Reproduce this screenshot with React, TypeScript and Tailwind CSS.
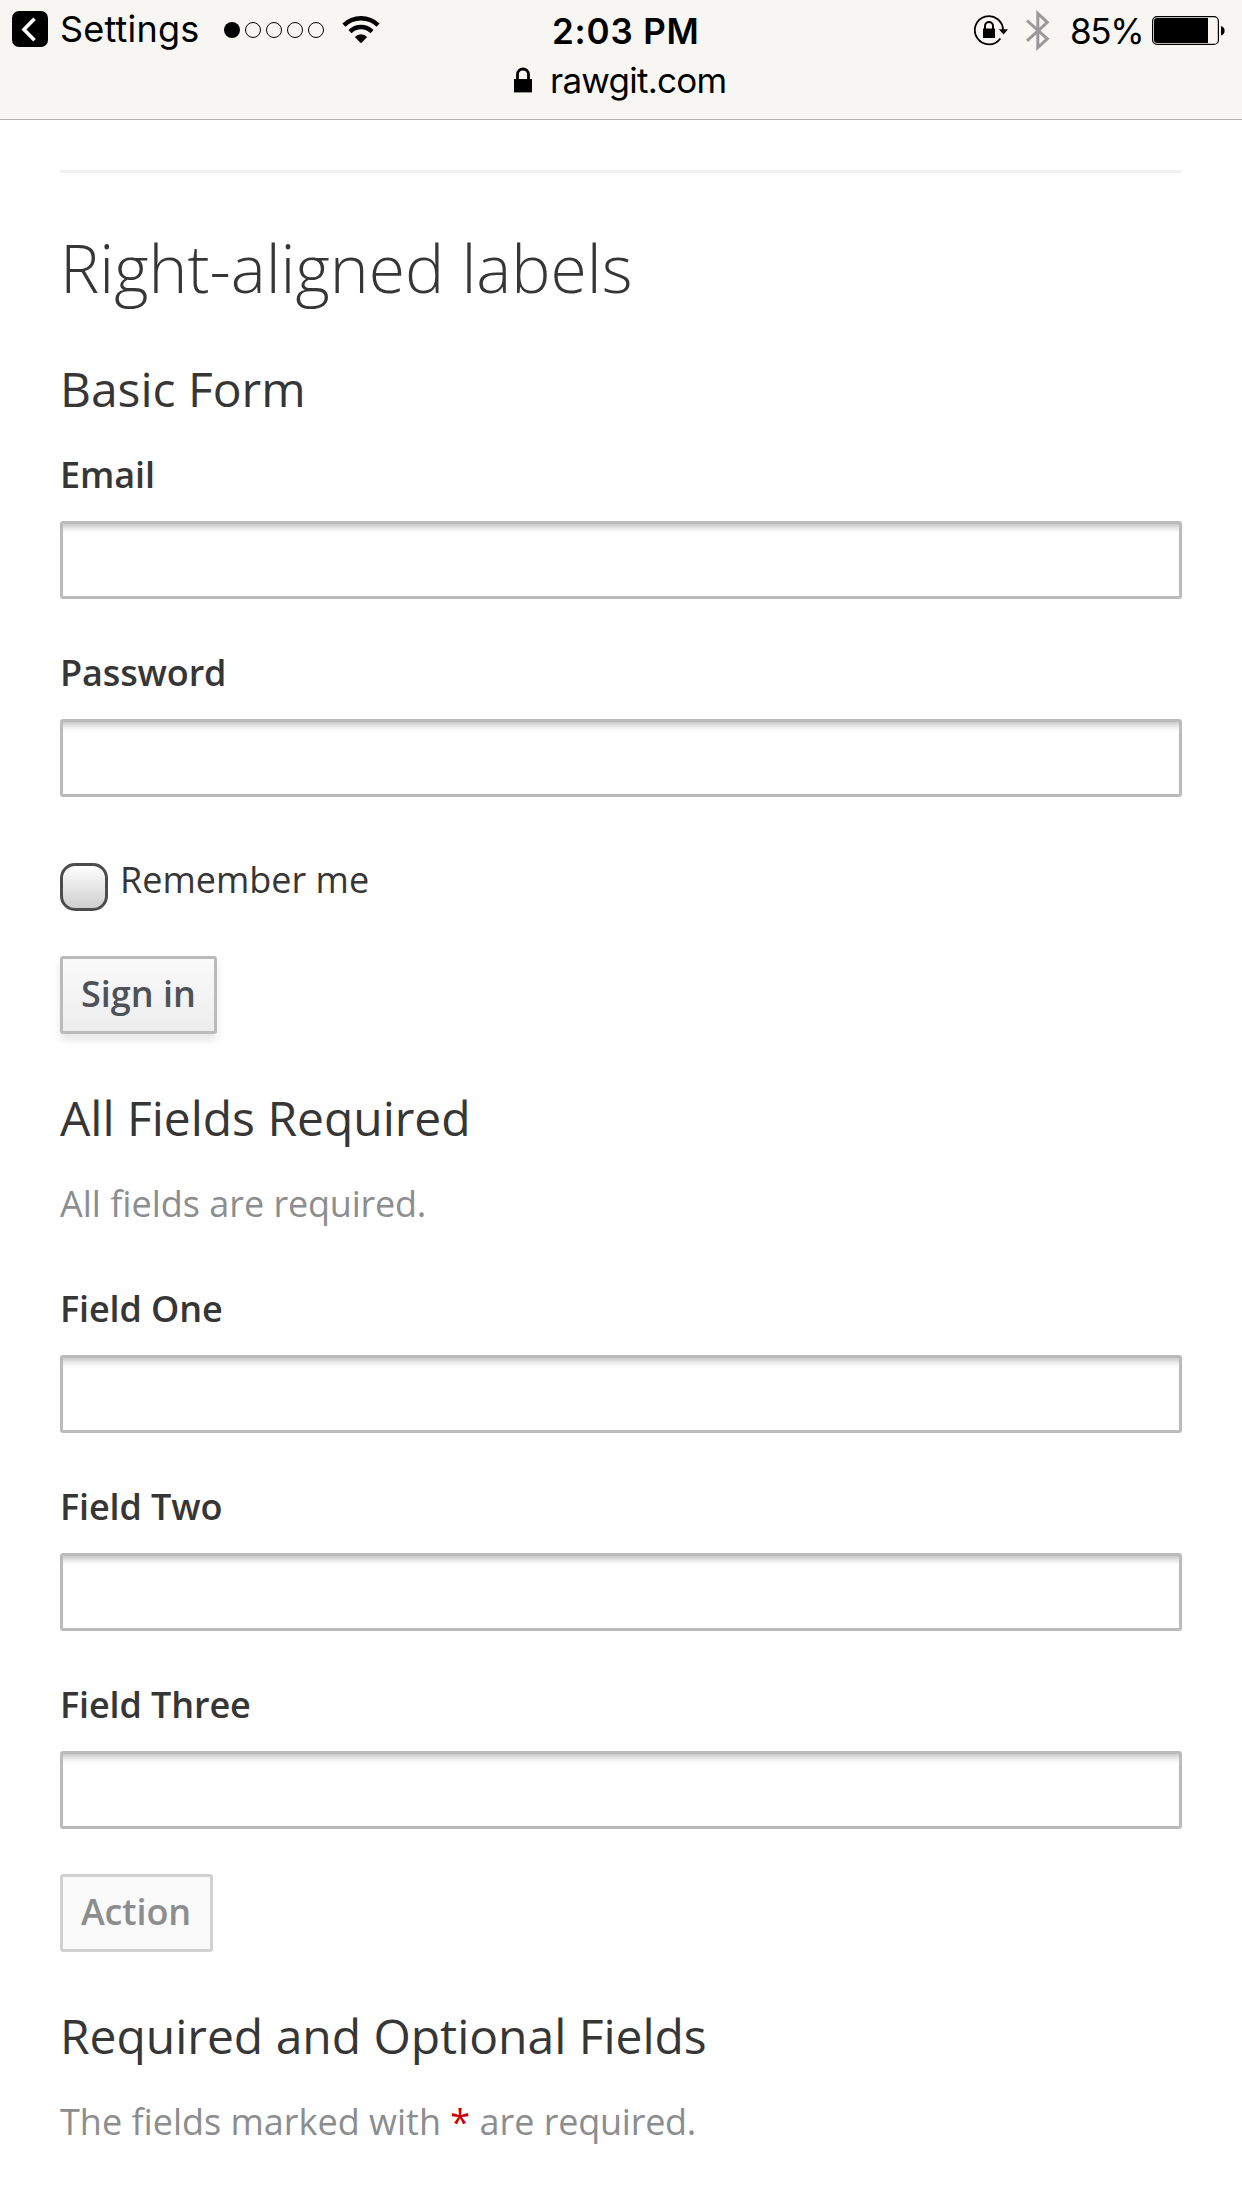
import type { ReactNode } from "react";

function SignalDots() {
  return (
    <div className="ml-[26px] mt-[22px] flex gap-[5px]">
      <span className="size-4 rounded-full bg-black" />
      {[1, 2, 3, 4].map((n) => (
        <span key={n} className="size-4 rounded-full border border-black" />
      ))}
    </div>
  );
}

function WifiIcon() {
  return (
    <svg className="ml-[18px] mt-[15px]" width="38" height="29" viewBox="0 0 38 29">
      <g fill="none" stroke="#000" strokeWidth="4.4">
        <path d="M1.9 10.2 A24.5 24.5 0 0 1 36.1 10.2" />
        <path d="M8 16.6 A15.5 15.5 0 0 1 30 16.6" />
      </g>
      <path d="M12.8 22 A8.6 8.6 0 0 1 25.2 22 L19 28.2 Z" />
    </svg>
  );
}

function BackIcon() {
  return (
    <svg className="mt-[11px]" width="36" height="36" viewBox="0 0 36 36">
      <rect width="36" height="36" rx="7" />
      <path d="M22.5 7.8 L12 18.5 L22.5 29.2" fill="none" stroke="#fff" strokeWidth="3.6" />
    </svg>
  );
}

function RotationLockIcon() {
  return (
    <svg className="mt-[14px]" width="35" height="32" viewBox="0 0 35 32">
      <path d="M26.4 24.4 A14.1 14.1 0 1 1 29 17" fill="none" stroke="#000" strokeWidth="1.8" />
      <path d="M24.8 15.3 H34 L29.6 20.6 Z" />
      <rect x="9" y="14.5" width="12" height="9.5" />
      <path d="M11 15 V12 a4 4 0 0 1 8 0 V15" fill="none" stroke="#000" strokeWidth="2" />
    </svg>
  );
}

function BluetoothIcon() {
  return (
    <svg className="ml-[17px] mt-[10px]" width="24" height="42" viewBox="0 0 24 42">
      <path
        d="M1 10.5 L21.3 28.8 L11.8 37.6 V3.5 L21.3 12.3 L1 30.8"
        fill="none"
        stroke="#999"
        strokeWidth="3"
      />
    </svg>
  );
}

function BatteryIcon() {
  return (
    <svg className="mt-[16px]" width="74" height="29" viewBox="0 0 74 29">
      <rect x="0.6" y="0.6" width="65.8" height="27.8" rx="4.5" fill="none" stroke="#000" strokeWidth="1.2" />
      <path d="M5 2 H56 V27 H5 a3 3 0 0 1 -3 -3 V5 a3 3 0 0 1 3 -3 Z" />
      <path d="M69 10 a5 5 0 0 1 0 9.6 Z" />
    </svg>
  );
}

function LockIcon() {
  return (
    <svg width="18" height="26" viewBox="0 0 18 26">
      <rect y="12" width="18" height="13.4" />
      <path d="M3.5 13 V7.5 a5.5 5.5 0 0 1 11 0 V13" fill="none" stroke="#000" strokeWidth="2.8" />
    </svg>
  );
}

function BrowserBar() {
  return (
    <header className="h-[120px] border-b border-[#b0b0b0] bg-[#f7f6f3] font-['Inter',sans-serif] text-[36px] leading-[44px] text-black">
      <div className="grid h-[58px] grid-cols-[552px_422px_1fr] whitespace-nowrap">
        <div className="flex items-start pl-3">
          <BackIcon />
          <span className="ml-[12px] mt-[7px] w-[138px] tracking-[0.2px]">Settings</span>
          <SignalDots />
          <WifiIcon />
        </div>
        <span className="mt-[9px] text-[35px] font-semibold tracking-[0.8px]">2:03 PM</span>
        <div className="flex items-start">
          <RotationLockIcon />
          <BluetoothIcon />
          <span className="ml-[20px] mt-[9px] w-[82px] text-[35px] tracking-[-1.3px]">85%</span>
          <BatteryIcon />
        </div>
      </div>
      <div className="flex items-start pl-[514px]">
        <div className="pt-[9px]">
          <LockIcon />
        </div>
        <span className="ml-[18px] whitespace-nowrap text-[35px] tracking-[-0.75px]">rawgit.com</span>
      </div>
    </header>
  );
}

function Field({ label }: { label: string }) {
  return (
    <div className="mb-[44px]">
      <label className="block">
        <span className="block h-[76px] font-semibold leading-[60px] tracking-[-0.12px]">{label}</span>
        <input className="block h-[78px] w-full rounded-[3px] border-[3px] border-[#bbb] bg-white px-[18px] shadow-[inset_0_9px_7px_-6px_rgba(3,3,3,0.26)] outline-none" />
      </label>
    </div>
  );
}

function SubHeading({ children }: { children: ReactNode }) {
  return <h3 className="text-[48px] leading-[54px] tracking-[-0.03px]">{children}</h3>;
}

function Note({ children }: { children: ReactNode }) {
  return <p className="mt-[29px] leading-[60px] text-[#8b8d8f]">{children}</p>;
}

export default function App() {
  return (
    <div className="h-[2208px] overflow-hidden bg-white font-['Open_Sans',sans-serif] text-[36px] text-[#363636]">
      <BrowserBar />
      <main className="px-[60px] pt-[50px]">
        <hr className="border-t-[3px] border-[#f1f1f1]" />
        <h1 className="mt-[58px] text-[66px] font-light leading-[72px]">Right-aligned labels</h1>

        <form>
          <div className="pb-[29px] pt-[59px]">
            <SubHeading>Basic Form</SubHeading>
          </div>
          <Field label="Email" />
          <Field label="Password" />
          <label className="flex items-start pt-2">
            <input
              type="checkbox"
              className="mt-[14px] size-12 appearance-none rounded-[15px] border-[3px] border-[#4c4c4c] bg-linear-to-b from-white to-[#cfcfcf]"
            />
            <span className="ml-3 mt-px leading-[60px]">Remember me</span>
          </label>
          <button
            type="button"
            className="mt-[45px] block h-[78px] w-[157px] rounded-[3px] border-[3px] border-[#bbb] bg-linear-to-b from-[#fafafa] to-[#ededed] pb-[2px] text-center font-semibold leading-[60px] text-[#4d5258] shadow-[0_6px_9px_rgba(3,3,3,0.1)]"
          >
            Sign in
          </button>
        </form>

        <form className="mt-[57px]">
          <SubHeading>All Fields Required</SubHeading>
          <Note>
            All fields are <span className="tracking-[-0.25px]">required.</span>
          </Note>
          <div className="mt-[45px]">
            <Field label="Field One" />
            <Field label="Field Two" />
            <Field label="Field Three" />
          </div>
          <button
            type="button"
            disabled
            className="mt-[45px] block h-[78px] w-[153px] rounded-[3px] border-[3px] border-[#d1d1d1] bg-[#fafafa] pb-[2px] pr-px text-center font-semibold leading-[60px] tracking-[-0.1px] text-[#8b8d8f]"
          >
            Action
          </button>
        </form>

        <section className="mt-[57px]">
          <SubHeading>Required and Optional Fields</SubHeading>
          <Note>
            The fields marked with <span className="text-[#c00]">*</span> are{" "}
            <span className="tracking-[-0.25px]">required.</span>
          </Note>
        </section>
      </main>
    </div>
  );
}
